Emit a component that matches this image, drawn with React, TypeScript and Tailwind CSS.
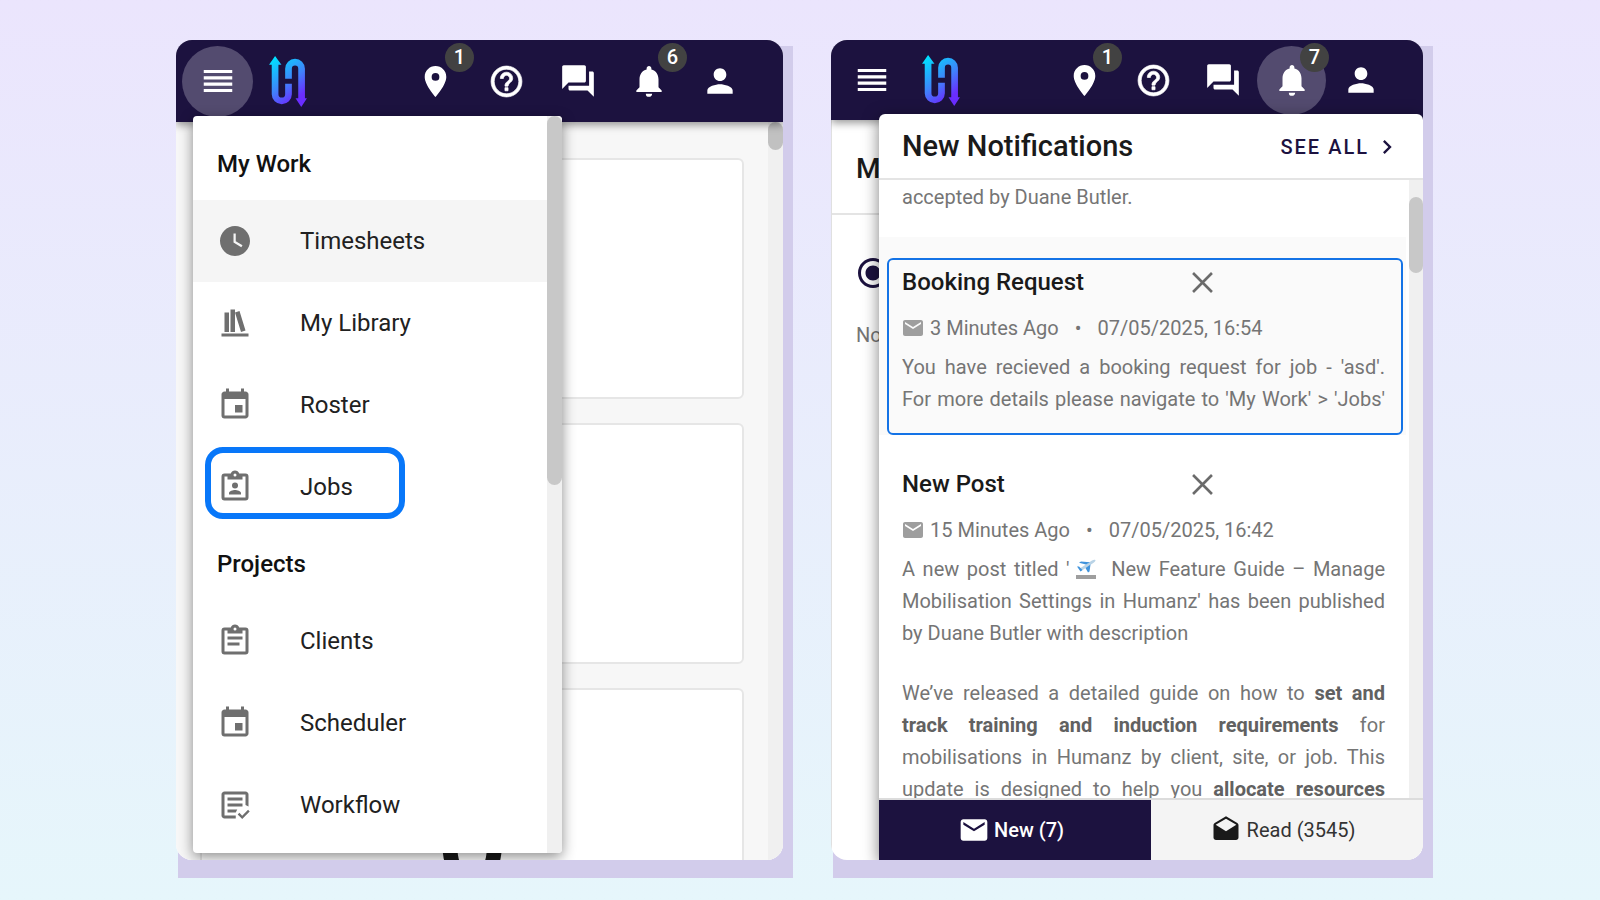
import React from "react";
import {
  MdChevronRight,
  MdDrafts,
  MdEmail,
  MdEvent,
  MdForum,
  MdNotifications,
  MdPerson,
  MdPlace,
  MdRadioButtonChecked,
  MdReorder,
  MdWatchLater,
} from "react-icons/md";

type IconProps = { className?: string };

function HelpIcon({ className }: IconProps) {
  return (
    <svg viewBox="0 0 24 24" fill="currentColor" stroke="currentColor" strokeWidth=".5" className={className}>
      <path d="M11 18h2v-2h-2v2zm1-16C6.48 2 2 6.48 2 12s4.48 10 10 10 10-4.48 10-10S17.52 2 12 2zm0 18c-4.41 0-8-3.59-8-8s3.59-8 8-8 8 3.590 8 8-3.590 8-8 8zm0-14c-2.210 0-4 1.790-4 4h2c0-1.100.9-2 2-2s2 .9 2 2c0 2-3 1.750-3 5h2c0-2.250 3-2.500 3-5 0-2.210-1.790-4-4-4z" />
    </svg>
  );
}

function BookshelfIcon({ className }: IconProps) {
  return (
    <svg viewBox="0 0 24 24" fill="currentColor" className={className}>
      <path d="M9 3V18H12V3H9M12 5L16 18L19 17L15 4L12 5M5 5V18H8V5H5M3 19V21H21V19H3Z" />
    </svg>
  );
}

const clipboard =
  "M19,3H14.82C14.4,1.84 13.3,1 12,1C10.7,1 9.6,1.84 9.18,3H5A2,2 0 0,0 3,5V19A2,2 0 0,0 5,21H19A2,2 0 0,0 21,19V5A2,2 0 0,0 19,3M12,3A1,1 0 0,1 13,4A1,1 0 0,1 12,5A1,1 0 0,1 11,4A1,1 0 0,1 12,3M7,7H17V5H19V19H5V5H7V7";

function ClipboardAccountIcon({ className }: IconProps) {
  return (
    <svg viewBox="0 0 24 24" fill="currentColor" className={className}>
      <path d={clipboard} />
      <circle cx="12" cy="11" r="2" />
      <path d="M8 17V16C8 14.67 10.67 14 12 14C13.33 14 16 14.67 16 16V17H8Z" />
    </svg>
  );
}

function ClipboardTextIcon({ className }: IconProps) {
  return (
    <svg viewBox="0 0 24 24" fill="currentColor" className={className}>
      <path d={clipboard} />
      <path d="M17,11H7V9H17V11M15,15H7V13H15V15Z" />
    </svg>
  );
}

function TextBoxCheckIcon({ className }: IconProps) {
  return (
    <svg viewBox="0 0 24 24" fill="currentColor" className={className}>
      <path d="M17 9H7V7H17V9M17 13H7V11H17V13M13.5 15H7V17H12.5L13.5 15M12.5 19H5V5H19V12L21 13V5C21 3.9 20.1 3 19 3H5C3.9 3 3 3.9 3 5V19C3 20.1 3.9 21 5 21H12.5V19" />
      <path d="M21.3 16.2L17.4 20.1L15.5 18.2L14.4 19.3L17.4 22.3L22.4 17.3Z" transform="translate(-.6 -1)" />
    </svg>
  );
}

function CloseIcon({ className }: IconProps) {
  return (
    <svg viewBox="0 0 20 20" fill="none" stroke="currentColor" strokeWidth="2.5" className={className}>
      <path d="M1 1L19 19M19 1L1 19" />
    </svg>
  );
}

function DepartureIcon({ className }: IconProps) {
  return (
    <svg viewBox="0 0 20 20" className={className} role="img" aria-label="Airplane departure">
      <path d="M3 10L16 1.5C18 .4 19.8 .6 19.5 1.6C19.3 2.6 18 3.6 16.5 4.5L5 12Z" fill="#b9d3e6" />
      <path d="M10 5.500L3 3.700L5 2.600L14 3.300ZM9.500 9L12 13.500L13.500 12.500L14.500 5.500Z" fill="#3f93dc" />
      <path d="M1 7.500L4.500 12.500L6.500 11L3 7.500Z" fill="#3f93dc" />
      <rect y="16" width="20" height="4" fill="#9e9e9e" />
    </svg>
  );
}

function Logo() {
  return (
    <svg viewBox="0 0 113 152" className="h-[51px] w-[38px]" fill="none" role="img" aria-label="Humanz">
      <defs>
        <linearGradient id="logo" gradientUnits="userSpaceOnUse" x1="10" y1="10" x2="105" y2="140">
          <stop offset="0" stopColor="#00e0ff" />
          <stop offset=".5" stopColor="#3f83fb" />
          <stop offset=".85" stopColor="#6a2dff" />
        </linearGradient>
      </defs>
      <g stroke="url(#logo)" strokeWidth="20">
        <path d="M18 20V114A20 20 0 0 0 58 114V83" />
        <path d="M58 68V38A19.5 19.5 0 0 1 97 38V130" />
      </g>
      <path d="M0 26L18 0L37 26ZM79 126H113L96 152Z" fill="url(#logo)" />
    </svg>
  );
}

type HeaderProps = { alerts: number; active: "menu" | "alerts"; height: string; button: string };

function Header({ alerts, active, height, button }: HeaderProps) {
  const base = "relative flex shrink-0 items-center justify-center rounded-full " + button;
  const badge =
    "absolute -top-[3px] -right-[3px] flex size-[29px] items-center justify-center rounded-full bg-[#424242] text-xl font-medium";
  return (
    <header
      className={
        "relative flex shrink-0 items-center bg-[#1c123f] pr-7 pl-1.5 text-white shadow-[0_3px_8px_rgba(0,0,0,0.4)] " +
        height
      }
    >
      <button aria-label="Menu" className={base + (active === "menu" ? " bg-[#534b6f]" : "")}>
        <MdReorder className="size-[38px]" />
      </button>
      <a href="/" className="ml-4">
        <Logo />
      </a>
      <div className="ml-auto flex">
        <button aria-label="Locations" className={base}>
          <MdPlace className="size-[37px]" />
          <span className={badge}>1</span>
        </button>
        <button aria-label="Help" className={base}>
          <HelpIcon className="size-[37px]" />
        </button>
        <button aria-label="Messages" className={base}>
          <MdForum className="size-[38px]" />
        </button>
        <button aria-label="Notifications" className={base + (active === "alerts" ? " bg-[#534b6f]" : "")}>
          <MdNotifications className="size-[38px]" />
          <span className={badge}>{alerts}</span>
        </button>
        <button aria-label="Account" className={base}>
          <MdPerson className="size-[38px]" />
        </button>
      </div>
    </header>
  );
}

const menu = [
  {
    title: "My Work",
    items: [
      { label: "Timesheets", icon: MdWatchLater },
      { label: "My Library", icon: BookshelfIcon },
      { label: "Roster", icon: MdEvent },
      { label: "Jobs", icon: ClipboardAccountIcon },
    ],
  },
  {
    title: "Projects",
    items: [
      { label: "Clients", icon: ClipboardTextIcon },
      { label: "Scheduler", icon: MdEvent },
      { label: "Workflow", icon: TextBoxCheckIcon },
    ],
  },
];

function SideMenu() {
  return (
    <nav className="absolute top-[76px] bottom-[7px] left-[17px] flex w-[369px] overflow-hidden rounded bg-white shadow-[0_4px_14px_rgba(0,0,0,0.45)]">
      <div className="flex-1 pt-3">
        {menu.map((group) => (
          <div key={group.title}>
            <h2 className="flex h-[72px] items-center px-6 text-2xl font-medium text-[#111]">{group.title}</h2>
            {group.items.map(({ label, icon: Icon }) => (
              <a
                key={label}
                href="#"
                className={
                  "relative flex h-[82px] items-center pl-6 text-2xl text-[#212121]" +
                  (label === "Timesheets" ? " bg-[#f5f5f5]" : "")
                }
              >
                <Icon className="mr-[47px] size-9 text-[#6f6f6f]" />
                {label}
                {/* Highlight */}
                {label === "Jobs" && (
                  <span className="absolute top-px left-3 h-[72px] w-[200px] rounded-[18px] border-[6px] border-[#0877f9]" />
                )}
              </a>
            ))}
          </div>
        ))}
      </div>
      {/* Scrollbar */}
      <div className="w-[15px] bg-[#f0f0f0]">
        <div className="h-1/2 rounded-full bg-[#c8c8c8]" />
      </div>
    </nav>
  );
}

function MenuScreen() {
  return (
    <Screen>
      <Header alerts={6} active="menu" height="h-[82px]" button="size-[71px]" />
      <div className="flex min-h-0 flex-1 bg-[#f7f7f7]">
        <div className="flex flex-1 flex-col gap-6 pt-9 pr-6 pl-6">
          <div className="h-[241px] shrink-0 rounded-md border-2 border-[#e6e6e6] bg-white" />
          <div className="h-[241px] shrink-0 rounded-md border-2 border-[#e6e6e6] bg-white" />
          <div className="h-[241px] shrink-0 rounded-md border-2 border-[#e6e6e6] bg-white pt-[84px] text-center text-9xl font-medium text-[#1a1a1a]">
            0
          </div>
        </div>
        <div className="w-[15px] bg-[#f0f0f0]">
          <div className="h-7 rounded-full bg-[#c1c1c1]" />
        </div>
      </div>
      <SideMenu />
    </Screen>
  );
}

type NotificationProps = { title: string; ago: string; date: string; children: React.ReactNode };

function Notification({ title, ago, date, children }: NotificationProps) {
  return (
    <>
      <div className="grid grid-cols-5 items-center">
        <h3 className="col-span-3 text-2xl leading-8 font-medium text-[#1a1a1a]">{title}</h3>
        <button aria-label="Dismiss" className="justify-self-start text-[#6b6b6b]">
          <CloseIcon className="size-[21px]" />
        </button>
      </div>
      <p className="mt-3.5 flex items-center leading-8">
        <MdEmail className="mr-[5px] -ml-px size-6 text-[#9e9e9e]" />
        {ago}
        <span className="mx-4">•</span>
        {date}
      </p>
      <div className="mt-[7px] text-justify leading-8">{children}</div>
    </>
  );
}

function NotificationsPanel() {
  return (
    <section className="absolute top-[74px] right-0 bottom-0 left-12 flex flex-col rounded-t-md bg-white shadow-[0_4px_16px_rgba(0,0,0,0.5)]">
      <div className="flex h-[66px] shrink-0 items-center justify-between border-b-2 border-[#e4e4e4] pt-0.5 pr-[22px] pl-[23px]">
        <h1 className="text-[29px] font-medium text-[#1a1a1a]">New Notifications</h1>
        <a href="#" className="flex items-center text-xl font-medium tracking-widest text-[#1c123f]">
          SEE ALL
          <MdChevronRight className="ml-1 size-7" />
        </a>
      </div>
      <div className="flex min-h-0 flex-1 text-xl text-[#757575]">
        <div className="min-w-0 flex-1 overflow-hidden">
          <p className="pt-px pb-6 pl-[23px] leading-8">accepted by Duane Butler.</p>
          <article className="mr-[3px] bg-[#fafafa] pt-[21px] pr-[3px] pl-2">
            <div className="rounded-md border-2 border-[#1473e6] pt-1.5 pr-4 pb-[18px] pl-[13px]">
              <Notification title="Booking Request" ago="3 Minutes Ago" date="07/05/2025, 16:54">
                <p className="[text-align-last:justify]">
                  You have recieved a booking request for job - 'asd'.
                  <br />
                  For more details please navigate to 'My Work' &gt; 'Jobs'
                </p>
              </Notification>
            </div>
          </article>
          <article className="pt-[33px] pr-6 pl-[23px]">
            <Notification title="New Post" ago="15 Minutes Ago" date="07/05/2025, 16:42">
              <p className="mb-7">
                A new post titled '<DepartureIcon className="mr-2 ml-1.5 inline size-5 align-[-3px]" /> New Feature
                Guide – Manage Mobilisation Settings in Humanz' has been published by Duane Butler with description
              </p>
              <p className="[text-align-last:justify]">
                We’ve released a detailed guide on how to{" "}
                <strong className="font-bold text-[#616161]">set and track training and induction requirements</strong>{" "}
                for mobilisations in Humanz by client, site, or job. This update is designed to help you{" "}
                <strong className="font-bold text-[#616161]">allocate resources</strong>
              </p>
            </Notification>
          </article>
        </div>
        <div className="w-3.5 bg-[#f0f0f0] pt-[17px]">
          <div className="h-[76px] rounded-full bg-[#c8c8c8]" />
        </div>
      </div>
      {/* Tabs */}
      <div className="grid h-[62px] shrink-0 grid-cols-2 border-t-2 border-[#dcdcdc] text-xl">
        <button className="flex items-center justify-center gap-1 bg-[#1c123f] pr-2 font-medium text-white">
          <MdEmail className="size-8" />
          New (7)
        </button>
        <button className="flex items-center justify-center gap-1.5 bg-[#f4f4f4] pr-2 text-[#333]">
          <MdDrafts className="size-[30px] text-[#1a1a1a]" />
          Read (3545)
        </button>
      </div>
    </section>
  );
}

function NotificationsScreen() {
  return (
    <Screen>
      <Header alerts={7} active="alerts" height="h-20" button="size-[69px]" />
      <div className="flex-1 border-l border-[#e0e0e0]">
        <h2 className="flex h-[95px] items-center border-b-2 border-[#e4e4e4] pt-1 pl-6 text-[28px] font-medium text-[#1a1a1a]">
          M
        </h2>
        <MdRadioButtonChecked className="mt-10 ml-[23px] size-9 text-[#1c123f]" />
        <p className="mt-7 pl-6 text-xl leading-8 text-[#757575]">No</p>
      </div>
      <NotificationsPanel />
    </Screen>
  );
}

function Screen({ children }: { children: React.ReactNode }) {
  return (
    <div className="relative min-h-0">
      {/* Offset backdrop */}
      <div className="absolute top-1.5 -right-2.5 -bottom-[18px] left-0.5 bg-[#d2cceb]" />
      <div className="relative flex h-full flex-col overflow-hidden rounded-2xl bg-white">{children}</div>
    </div>
  );
}

export default function App() {
  return (
    <main className="grid h-screen grid-cols-[607fr_592fr] grid-rows-[minmax(0,1fr)] gap-12 bg-linear-to-b from-[#ebe5fd] to-[#e6f6fb] py-10 pr-[177px] pl-44 font-[Roboto,sans-serif]">
      <MenuScreen />
      <NotificationsScreen />
    </main>
  );
}
